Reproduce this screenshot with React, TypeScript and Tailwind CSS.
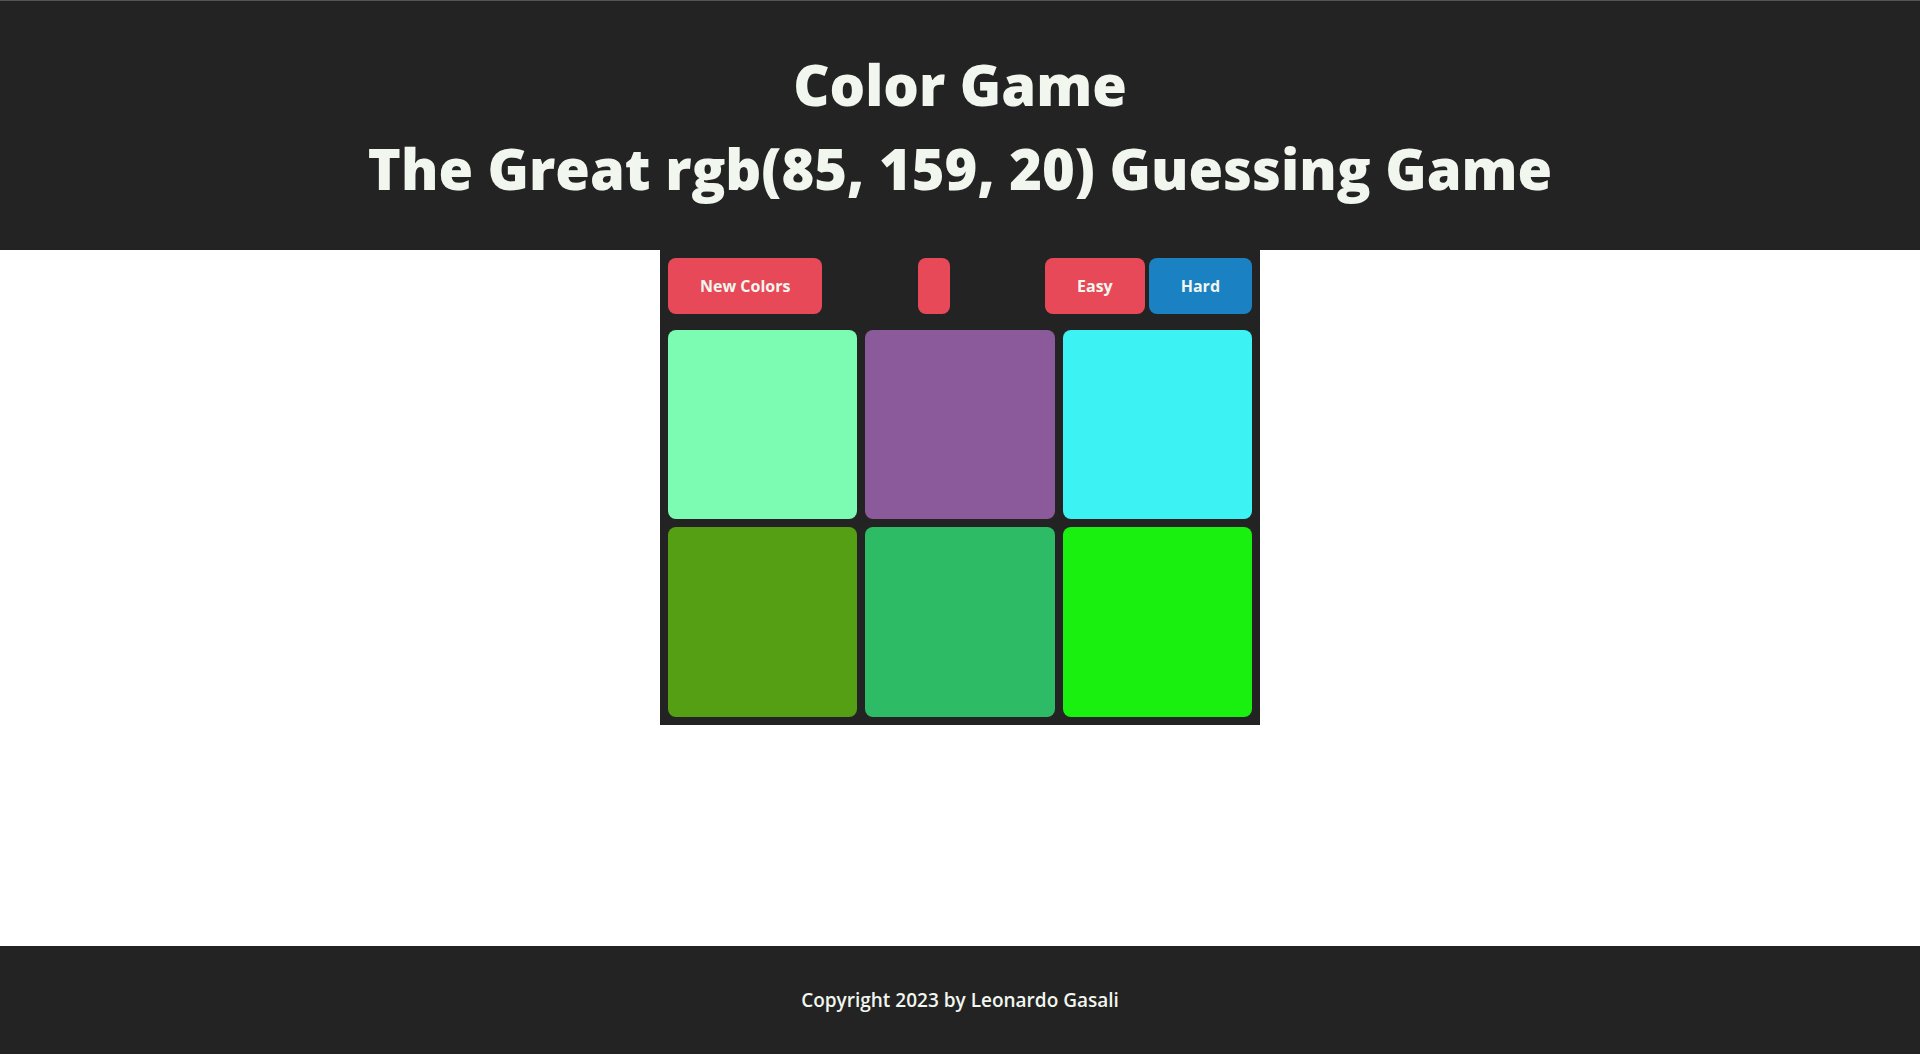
import * as React from 'react'

const squares = [
  '#7cfbb2',
  '#8b5a9a',
  '#3cf2f3',
  '#559f14',
  '#2dbc65',
  '#1af010',
]

export default function App() {
  return (
    <div className="flex min-h-screen flex-col bg-white font-['Open_Sans',sans-serif] text-[#f1f6ef]">
      <header className="border-t border-[#555555] bg-[#232323] pt-[41px] pb-10 text-center">
        <h1 className="text-[56px] font-extrabold leading-[84px]">Color Game</h1>
        <h1 className="text-[56px] font-extrabold leading-[84px]">The Great rgb(85, 159, 20) Guessing Game</h1>
      </header>

      <main className="flex-1">
        <div className="mx-auto w-[600px] bg-[#232323] p-2">
          <div className="mb-4 flex items-center justify-between">
            <button className="rounded-lg bg-[#e84958] px-8 py-4 text-base font-bold leading-6">New Colors</button>
            <span className="h-14 w-8 rounded-lg bg-[#e84958]" />
            <div className="flex gap-1">
              <button className="rounded-lg bg-[#e84958] px-8 py-4 text-base font-bold leading-6">Easy</button>
              <button className="rounded-lg bg-[#1a81c3] px-8 py-4 text-base font-bold leading-6">Hard</button>
            </div>
          </div>
          <div className="grid grid-cols-3 gap-2">
            {squares.map((c) => (
              <div key={c} className="aspect-square rounded-lg" style={{ backgroundColor: c }} />
            ))}
          </div>
        </div>
      </main>

      <footer className="flex h-[108px] items-center justify-center bg-[#232323]">
        <p className="text-[19px] font-semibold">Copyright 2023 by Leonardo Gasali</p>
      </footer>
    </div>
  )
}
